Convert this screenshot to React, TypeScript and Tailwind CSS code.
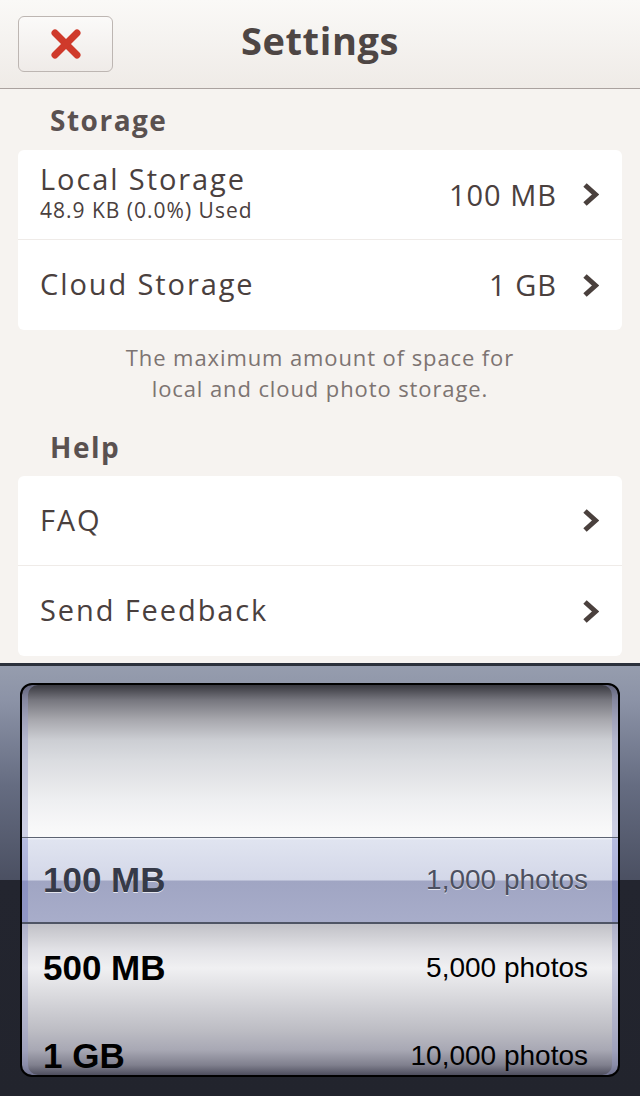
import React from "react";

const Chevron = () => (
  <svg width="17" height="25" viewBox="0 0 17 25" className="shrink-0">
    <polyline points="3,3 13.5,12.5 3,22" fill="none" stroke="#4a403d" strokeWidth="5" strokeLinecap="butt" strokeLinejoin="miter" />
  </svg>
);

const XIcon = () => (
  <svg width="32" height="32" viewBox="0 0 32 32">
    <line x1="5" y1="5" x2="27" y2="27" stroke="#cf3a2b" strokeWidth="7" strokeLinecap="round" />
    <line x1="27" y1="5" x2="5" y2="27" stroke="#cf3a2b" strokeWidth="7" strokeLinecap="round" />
  </svg>
);

const font = "font-['Open_Sans',sans-serif]";

function Row({ title, sub, value, last }: { title: string; sub?: string; value?: string; last?: boolean }) {
  return (
    <div className={`h-[90px] flex items-center pl-[22px] pr-[23px] ${last ? "" : "border-b border-[#efebe8]"}`}>
      <div className="flex-1 flex flex-col">
        <span className={`text-[29px] tracking-[1.9px] text-[#4a403e] ${sub ? "leading-[28px]" : "leading-[36px] -mt-[2px]"}`}>{title}</span>
        {sub && <span className="mt-[2px] text-[21px] leading-[30px] tracking-[1px] text-[#4a403e]">{sub}</span>}
      </div>
      {value && <span className="text-[29px] tracking-[1px] text-[#4a403e] mr-[25px]">{value}</span>}
      <Chevron />
    </div>
  );
}

export default function App() {
  return (
    <div className={`w-[640px] h-[1096px] flex flex-col bg-[#f6f3f0] overflow-hidden ${font}`}>
      {/* header */}
      <div className="h-[89px] shrink-0 flex items-center px-[18px] border-b border-[#aaa29f] bg-[linear-gradient(to_bottom,#faf9f7,#efebe7)]">
        <div className="w-[95px] h-[56px] rounded-[6px] border border-[#bdb6b2] bg-[linear-gradient(to_bottom,#fbfaf9,#efebe8)] flex items-center justify-center">
          <XIcon />
        </div>
        <div className="flex-1 text-center text-[38px] font-bold text-[#4e4644] tracking-[0.6px] pb-[7px]">Settings</div>
        <div className="w-[95px]" />
      </div>

      {/* Storage */}
      <div className="h-[61px] shrink-0 flex items-center pl-[50px] text-[28px] font-bold text-[#5a5150] tracking-[1.5px]">Storage</div>
      <div className="mx-[18px] bg-white rounded-[6px] shrink-0">
        <Row title="Local Storage" sub="48.9 KB (0.0%) Used" value="100 MB" />
        <Row title="Cloud Storage" value="1 GB" last />
      </div>
      <div className="h-[92px] shrink-0 pt-[12px] text-center text-[22px] leading-[31px] tracking-[0.9px] text-[#7d7472]">
        The maximum amount of space for
        <br />
        local and cloud photo storage.
      </div>

      {/* Help */}
      <div className="h-[54px] shrink-0 flex items-center pl-[50px] pb-[4px] text-[28px] font-bold text-[#5a5150] tracking-[1.5px]">Help</div>
      <div className="mx-[18px] bg-white rounded-[6px] shrink-0">
        <Row title="FAQ" />
        <Row title="Send Feedback" last />
      </div>

      {/* picker */}
      <div className="mt-[7px] h-[433px] shrink-0 border-t-[3px] border-[#2b303b] pt-[17px] px-[20px] bg-[linear-gradient(to_bottom,#969dae_0px,#8b92a6_36px,#656c81_120px,#4b5062_214px,#23252f_214px,#22242d_100%)] font-['Liberation_Sans',Arial,sans-serif]">
        <div className="h-[394px] border-2 border-black rounded-[12px] overflow-hidden flex flex-col bg-[linear-gradient(to_bottom,#38383f_0px,#76767e_15px,#a8a8ae_35px,#ccced3_55px,#dadce0_75px,#e4e5e8_95px,#eeeff1_115px,#f7f7f8_140px,#fafafa_152px,#c2c2c8_240px,#e2e2e6_265px,#f0f0f2_283px,#dadade_310px,#bdbdc4_345px,#a8a8b4_365px,#80808e_380px,#4e4e5e_390px)] shadow-[inset_6px_0_0_rgba(150,156,200,0.45),inset_-6px_0_0_rgba(150,156,200,0.45)]">
          <div className="h-[152px] shrink-0" />
          <div className="h-[87px] shrink-0 -mx-[2px] border-t border-b-2 border-t-[#5d6372] border-b-[#4f5565] bg-[linear-gradient(to_bottom,#f4f6fb_0px,#e0e4f0_2px,#d3d7e8_42px,#a0a5c3_43px,#a8adca_100%)] shadow-[inset_8px_0_0_rgba(100,108,190,0.35),inset_-8px_0_0_rgba(100,108,190,0.35)] flex items-center justify-between pl-[23px] pr-[32px]">
            <span className="text-[35px] font-bold text-[#363a48] [text-shadow:0_1px_0_rgba(255,255,255,0.7)]">100 MB</span>
            <span className="text-[28px] text-[#4c5060] [text-shadow:0_1px_0_rgba(255,255,255,0.7)]">1,000 photos</span>
          </div>
          <div className="h-[88px] shrink-0 flex items-center justify-between pl-[21px] pr-[30px]">
            <span className="text-[35px] font-bold text-black">500 MB</span>
            <span className="text-[28px] text-black">5,000 photos</span>
          </div>
          <div className="h-[88px] shrink-0 flex items-center justify-between pl-[21px] pr-[30px]">
            <span className="text-[35px] font-bold text-black">1 GB</span>
            <span className="text-[28px] text-black">10,000 photos</span>
          </div>
        </div>
      </div>
    </div>
  );
}
